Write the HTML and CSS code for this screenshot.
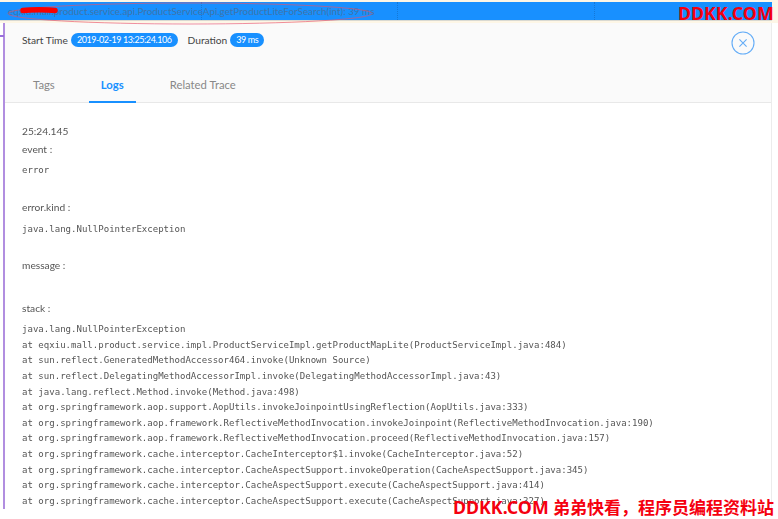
FILE: index.html
```html
<!DOCTYPE html>
<html lang="en">
<head>
<meta charset="utf-8">
<title>Span detail</title>
<link rel="stylesheet" href="styles.css">
</head>
<body>
<div class="page">
  <div class="shot">
    <div class="trace-bar">
      <span class="trace-title">eqxiu.mall.product.service.api.ProductServiceApi.getProductLiteForSearch(int): 39 ms</span>
      <i class="tick tick-a"></i><i class="tick tick-b"></i><i class="tick tick-c"></i>
    </div>
    <div class="panel">
      <i class="arrow"></i>
      <header class="head">
        <div class="meta">
          <span class="meta-label">Start Time</span>
          <span class="pill">2019-02-19 13:25:24.106</span>
          <span class="meta-label meta-gap">Duration</span>
          <span class="pill">39 ms</span>
        </div>
        <button class="close" aria-label="Close">
          <svg viewBox="0 0 24 24" width="24" height="24"><circle cx="12" cy="12" r="11" fill="none" stroke="#63acf7" stroke-width="1.1"/><path d="M8.4 8.4l7.2 7.2M15.6 8.4l-7.2 7.2" fill="none" stroke="#63acf7" stroke-width="1.1"/></svg>
        </button>
      </header>
      <nav class="tabs">
        <span class="tab">Tags</span>
        <span class="tab tab-active">Logs</span>
        <span class="tab">Related Trace</span>
      </nav>
      <section class="logs">
        <div class="log-time">25:24.145</div>
        <div class="log-key key-event">event :</div>
        <pre class="log-val val-event">error</pre>
        <div class="log-key key-kind">error.kind :</div>
        <pre class="log-val val-kind">java.lang.NullPointerException</pre>
        <div class="log-key key-msg">message :</div>
        <div class="log-key key-stack">stack :</div>
        <pre class="log-val stack">java.lang.NullPointerException
at eqxiu.mall.product.service.impl.ProductServiceImpl.getProductMapLite(ProductServiceImpl.java:484)
at sun.reflect.GeneratedMethodAccessor464.invoke(Unknown Source)
at sun.reflect.DelegatingMethodAccessorImpl.invoke(DelegatingMethodAccessorImpl.java:43)
at java.lang.reflect.Method.invoke(Method.java:498)
at org.springframework.aop.support.AopUtils.invokeJoinpointUsingReflection(AopUtils.java:333)
at org.springframework.aop.framework.ReflectiveMethodInvocation.invokeJoinpoint(ReflectiveMethodInvocation.java:190)
at org.springframework.aop.framework.ReflectiveMethodInvocation.proceed(ReflectiveMethodInvocation.java:157)
at org.springframework.cache.interceptor.CacheInterceptor$1.invoke(CacheInterceptor.java:52)
at org.springframework.cache.interceptor.CacheAspectSupport.invokeOperation(CacheAspectSupport.java:345)
at org.springframework.cache.interceptor.CacheAspectSupport.execute(CacheAspectSupport.java:414)
at org.springframework.cache.interceptor.CacheAspectSupport.execute(CacheAspectSupport.java:327)</pre>
      </section>
    </div>
  </div>
  <svg class="ink" viewBox="0 0 778 519" width="778" height="519" aria-hidden="true">
    <ellipse cx="190" cy="13.5" rx="182" ry="10.5" fill="none" stroke="#e8506a" stroke-width="0.8" opacity="0.8"/>
    <path d="M23 10.5C30 9.5 48 9.5 55 10.5" fill="none" stroke="#fa0000" stroke-width="5.5" stroke-linecap="round"/>
  </svg>
  <div class="mark mark-top">DDKK.COM</div>
  <div class="mark mark-bottom"><span class="mark-latin">DDKK.COM</span> 弟弟快看，程序员编程资料站</div>
</div>
</body>
</html>
```
FILE: styles.css
```css
* { box-sizing: border-box; }
html, body { margin: 0; padding: 0; background: #fff; }
.page {
  position: relative;
  width: 778px;
  height: 519px;
  overflow: hidden;
  background: linear-gradient(#fdf6e6 0, #fdf6e6 23px, #fff 23px);
  font-family: Lato, "Open Sans", sans-serif;
}
.shot {
  width: 773px;
  height: 509px;
  overflow: hidden;
  display: flex;
  flex-direction: column;
  padding-top: 2px;
}
.trace-bar {
  position: relative;
  flex: 0 0 18px;
  width: 772px;
  background: #1890ff;
  box-shadow: 0 1px 0 #d9d9d2;
  padding-left: 8px;
  font-size: 9.85px;
  line-height: 18px;
}
.trace-title {
  color: #3f74aa;
  white-space: nowrap;
}
.tick {
  position: absolute;
  top: 0;
  bottom: 0;
  border-left: 1px dotted #1478d8;
}
.tick-a { left: 201px; }
.tick-b { left: 397px; }
.tick-c { left: 594px; }
.panel {
  position: relative;
  flex: 1;
  margin: 3px 0 0 3px;
  width: 769px;
  border-left: 2px solid #b18ee0;
  border-right: 1px solid #ececec;
  background: #fff;
  display: flex;
  flex-direction: column;
}
.arrow {
  position: absolute;
  left: -5px;
  top: 12px;
  width: 4px;
  height: 2px;
  background: #9a6fdc;
}
.head {
  height: 50px;
  background: #fafafa;
  padding: 10px 16px 0 17px;
  display: flex;
  justify-content: space-between;
  align-items: flex-start;
}
.meta {
  display: flex;
  align-items: center;
  height: 14px;
  font-size: 10.2px;
  color: #444;
}
.meta-label { margin-right: 3px; }
.meta-gap { margin-left: 10px; }
.pill {
  height: 14px;
  padding: 0 6px;
  border-radius: 7px;
  background: #1890ff;
  color: #fff;
  font-size: 9px;
  letter-spacing: -0.42px;
  line-height: 14px;
  white-space: nowrap;
}
.close {
  width: 24px;
  height: 24px;
  margin-top: -2px;
  padding: 0;
  border: 0;
  background: none;
}
.close svg { display: block; }
.tabs {
  height: 30px;
  background: #fafafa;
  border-bottom: 1px solid #e8e8e8;
  display: flex;
  padding-left: 16px;
  font-size: 11.3px;
  color: #888;
}
.tab {
  height: 30px;
  padding: 4px 12px 0;
  line-height: 15px;
  margin-right: 22px;
}
.tab-active {
  color: #1890ff;
  font-weight: 700;
  border-bottom: 2px solid #1890ff;
}
.logs {
  flex: 1;
  overflow: hidden;
  padding: 21px 0 0 17px;
  color: #666;
  filter: blur(0.25px);
}
.log-time { font-size: 10.2px; line-height: 15px; color: #555; }
.log-key { font-size: 10.2px; line-height: 15px; color: #555; }
.log-val {
  margin: 0;
  font-family: "DejaVu Sans Mono", monospace;
  font-size: 9.05px;
  line-height: 15.6px;
  color: #555;
  white-space: pre;
}
.key-event { margin-top: 3px; }
.val-event { margin-top: 6px; }
.key-kind { margin-top: 21px; }
.val-kind { margin-top: 7px; }
.key-msg { margin-top: 21px; }
.key-stack { margin-top: 28px; }
.stack { margin-top: 6px; }
.ink {
  position: absolute;
  left: 0;
  top: 0;
  pointer-events: none;
}
.mark {
  position: absolute;
  color: #f5000f;
  font-family: "Noto Sans", "Noto Sans CJK SC", sans-serif;
  font-weight: 700;
  white-space: nowrap;
  line-height: 1;
}
.mark-top { left: 678px; top: 5px; font-size: 17.8px; }
.mark-bottom { left: 453px; top: 499px; font-size: 17px; }
.mark-latin { font-size: 17.8px; }
```
